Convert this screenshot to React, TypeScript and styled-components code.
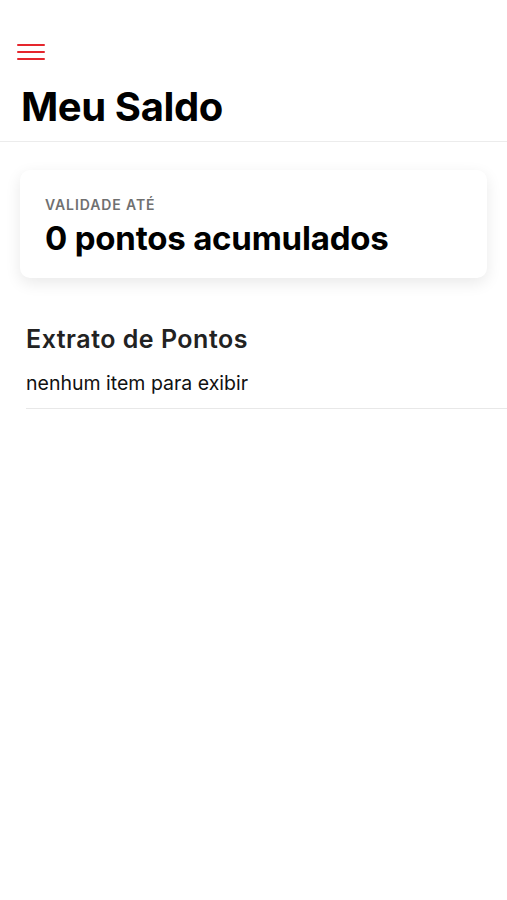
import styled, { createGlobalStyle } from "styled-components";

const GlobalStyle = createGlobalStyle`
  body {
    margin: 0;
    background: #ffffff;
    font-family: Inter, "Liberation Sans", Arial, sans-serif;
    -webkit-font-smoothing: antialiased;
  }
`;

const Screen = styled.div`
  width: 507px;
  min-height: 900px;
  background: #ffffff;
  display: flex;
  flex-direction: column;
`;

const Header = styled.header`
  display: flex;
  flex-direction: column;
  align-items: flex-start;
  padding: 44px 0 0 0;
  border-bottom: 1px solid #ececec;
`;

const MenuButton = styled.button`
  display: flex;
  flex-direction: column;
  gap: 5px;
  margin-left: 17px;
  padding: 0;
  border: 0;
  background: none;
  cursor: pointer;
`;

const MenuLine = styled.span`
  display: block;
  width: 28px;
  height: 2px;
  border-radius: 1px;
  background: #e5262d;
`;

const Title = styled.h1`
  margin: 23px 0 10px 21px;
  font-size: 40px;
  line-height: 48px;
  font-weight: 700;
  letter-spacing: -0.4px;
  color: #000000;
`;

const Content = styled.main`
  display: flex;
  flex-direction: column;
  padding: 28px 0 0 0;
`;

const BalanceCard = styled.section`
  margin: 0 20px;
  padding: 27px 25px 21px;
  border-radius: 10px;
  background: #ffffff;
  box-shadow: 0 5px 16px rgba(0, 0, 0, 0.09);
  display: flex;
  flex-direction: column;
  gap: 6px;
`;

const CardLabel = styled.span`
  font-size: 14px;
  line-height: 16px;
  font-weight: 600;
  letter-spacing: 0.9px;
  text-transform: uppercase;
  color: #707070;
`;

const CardValue = styled.span`
  font-size: 33px;
  line-height: 38px;
  font-weight: 700;
  letter-spacing: -0.2px;
  color: #000000;
`;

const Statement = styled.section`
  margin: 46px 0 0 26px;
  display: flex;
  flex-direction: column;
`;

const SectionTitle = styled.h2`
  margin: 0;
  font-size: 25px;
  line-height: 30px;
  font-weight: 600;
  letter-spacing: 0.5px;
  color: #222222;
`;

const EmptyRow = styled.div`
  padding: 17px 0 13px;
  font-size: 19.5px;
  line-height: 24px;
  color: #111111;
  border-bottom: 1px solid #e8e8e8;
`;

export default function App() {
  return (
    <>
      <GlobalStyle />
      <Screen>
        <Header>
          <MenuButton aria-label="menu">
            <MenuLine />
            <MenuLine />
            <MenuLine />
          </MenuButton>
          <Title>Meu Saldo</Title>
        </Header>
        <Content>
          <BalanceCard>
            <CardLabel>Validade até</CardLabel>
            <CardValue>0 pontos acumulados</CardValue>
          </BalanceCard>
          <Statement>
            <SectionTitle>Extrato de Pontos</SectionTitle>
            <EmptyRow>nenhum item para exibir</EmptyRow>
          </Statement>
        </Content>
      </Screen>
    </>
  );
}
